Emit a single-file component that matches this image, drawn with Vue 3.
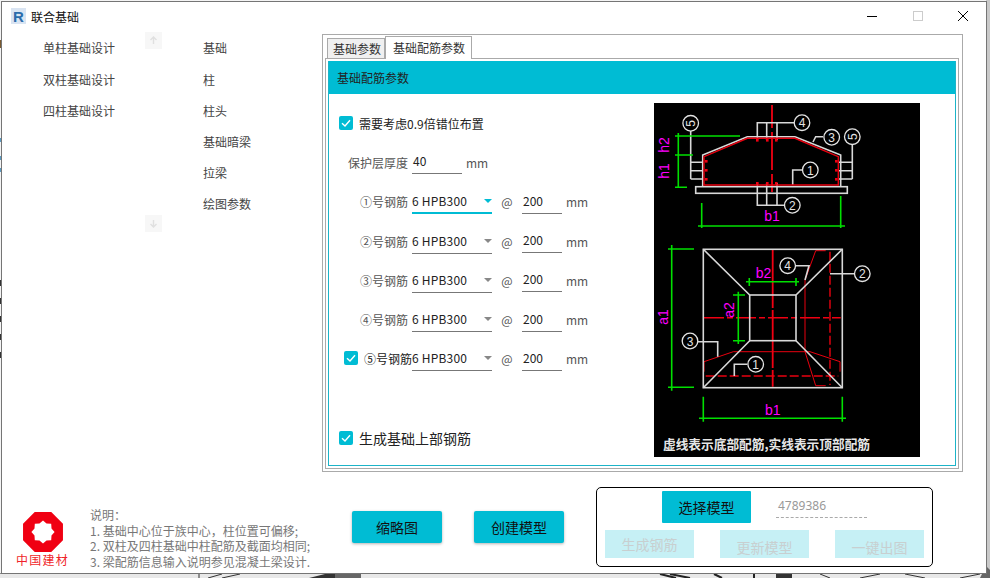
<template>
  <div class="desktop">
    <svg class="backdrop" width="990" height="578" viewBox="0 0 990 578">
      <rect x="0" y="0" width="990" height="578" fill="#f4f4f4" />
      <rect x="986" y="0" width="4" height="578" fill="#c9c9c9" />
      <rect x="0" y="573" width="990" height="5" fill="#e8e8e8" />
      <rect x="0" y="573" width="990" height="1" fill="#8a8a8a" />
      <rect x="0" y="40" width="1" height="8" fill="#7a5a30" />
      <path d="M0.5 138V142M0.5 156V160M0.5 168V172" stroke="#5c9ac0" />
      <path d="M0.5 280V286M0.5 298V304M0.5 316V322M0.5 334V340M0.5 352V358" stroke="#333" />
      <path d="M199 574V578M208 578L222 574M222 578L240 574" stroke="#333" fill="none" />
      <path d="M309 578L325 574H335V578Z" fill="#333" />
      <rect x="335" y="574" width="26" height="4" fill="#666" />
      <path d="M660 574L676 578M670 574L690 578M714 574L722 578M754 574V578" stroke="#222" stroke-width="2" fill="none" />
      <rect x="776" y="574" width="16" height="4" fill="#333" />
      <path d="M820 574L830 578M860 578L880 574M905 574L925 578M960 578L980 574" stroke="#333" fill="none" />
      <path d="M986 566L990 570V578H980Z" fill="#666" />
    </svg>

    <div class="window">
      <header class="titlebar">
        <svg class="app-icon" width="15" height="16" viewBox="0 0 15 16">
          <rect width="15" height="16" fill="#d9e4f2" />
          <text x="2" y="14" class="app-letter">R</text>
        </svg>
        <span class="title">联合基础</span>
        <div class="controls">
          <span class="ctrl">
            <svg width="12" height="12" viewBox="0 0 12 12"><path d="M1 6.5H11" stroke="#000" /></svg>
          </span>
          <span class="ctrl">
            <svg width="12" height="12" viewBox="0 0 12 12"><rect x="1.5" y="1.5" width="9" height="9" fill="none" stroke="#ccc" /></svg>
          </span>
          <span class="ctrl">
            <svg width="12" height="12" viewBox="0 0 12 12"><path d="M1 1L11 11M11 1L1 11" stroke="#000" /></svg>
          </span>
        </div>
      </header>

      <main class="main">
        <ul class="list list-types">
          <li v-for="t in types" :key="t">{{ t }}</li>
        </ul>
        <div class="scroller">
          <span class="scroll-btn">
            <svg width="9" height="9" viewBox="0 0 9 9"><path d="M4.5 8V1M1.5 4L4.5 1L7.5 4" stroke="#e0e0e0" fill="none" stroke-width="1.4" /></svg>
          </span>
          <span class="scroll-btn">
            <svg width="9" height="9" viewBox="0 0 9 9"><path d="M4.5 1V8M1.5 5L4.5 8L7.5 5" stroke="#e0e0e0" fill="none" stroke-width="1.4" /></svg>
          </span>
        </div>
        <ul class="list list-parts">
          <li v-for="p in parts" :key="p">{{ p }}</li>
        </ul>

        <section class="tabs">
          <div class="tab-strip">
            <span class="tab">基础参数</span>
            <span class="tab tab-active">基础配筋参数</span>
          </div>
          <div class="tab-panel">
            <div class="card">
              <div class="card-head">基础配筋参数</div>
              <div class="card-body">
                <div class="form">
                  <div class="row row-check">
                    <span class="check">
                      <svg width="14" height="14" viewBox="0 0 14 14"><path d="M3 7.2L6 10L11 4.2" stroke="#fff" stroke-width="1.4" fill="none" /></svg>
                    </span>
                    <span class="check-text">需要考虑0.9倍错位布置</span>
                  </div>
                  <div class="row">
                    <span class="label">保护层厚度</span>
                    <span class="field field-cover">40</span>
                    <span class="unit">mm</span>
                  </div>
                  <div v-for="(b, i) in bars" :key="b.name" class="row">
                    <span v-if="b.check" class="check check-five">
                      <svg width="14" height="14" viewBox="0 0 14 14"><path d="M3 7.2L6 10L11 4.2" stroke="#fff" stroke-width="1.4" fill="none" /></svg>
                    </span>
                    <span class="label" :class="{ 'label-five': b.check }">{{ b.name }}</span>
                    <span class="select" :class="{ 'select-focus': i === 0, 'select-five': b.check }">
                      6 HPB300
                      <i class="caret"></i>
                    </span>
                    <span class="at">@</span>
                    <span class="field field-space">200</span>
                    <span class="unit">mm</span>
                  </div>
                  <div class="row row-check row-last">
                    <span class="check">
                      <svg width="14" height="14" viewBox="0 0 14 14"><path d="M3 7.2L6 10L11 4.2" stroke="#fff" stroke-width="1.4" fill="none" /></svg>
                    </span>
                    <span class="check-text check-text-big">生成基础上部钢筋</span>
                  </div>
                </div>

                <svg class="sketch" width="266" height="354" viewBox="654 103 266 354">
                  <rect x="654" y="103" width="266" height="354" fill="#000" />
                  <!-- section -->
                  <path d="M772 105V128M772 132V170M772 174V192" stroke="#f00012" stroke-width="1.8" fill="none" />
                  <g stroke="#d8d8d8" stroke-width="1.6" fill="none">
                    <path d="M702.7 186.7V155L747.3 136.7H795L840.7 155V186.7" />
                    <rect x="695.7" y="186.7" width="151.6" height="6.6" />
                    <path d="M690.7 131V179M690.7 162.3H703M690.7 170.7H703M690.7 179H703" />
                    <path d="M852.3 145V179M852.3 162.3H838M852.3 170.7H838M852.3 179H838" />
                    <path d="M794 122.7H757.3V140M766.7 122.7V140M777 122.7V140" />
                    <path d="M784 205.3H757.3V183M766.7 205.3V183M777 205.3V183" />
                    <path d="M823 136.7H815.7L813 142" />
                    <path d="M802 170H792.7V185" />
                  </g>
                  <path d="M704 185V156.7L747.3 138.3H795L838.3 156.7V185Z" stroke="#e8000f" stroke-width="1.4" fill="none" />
                  <g fill="#f00012">
                    <rect v-for="d in rebarDots" :key="d[0] + '-' + d[1]" :x="d[0]" :y="d[1]" width="2.6" height="2.6" />
                  </g>
                  <g stroke="#00e000" stroke-width="1.6" fill="none">
                    <path d="M678.3 133V188M675 136H740M675 155H693M675 187.3H687" />
                    <path d="M701.7 203V228M840.7 196V228M698 226H845" />
                  </g>
                  <g class="cad-label">
                    <text x="669" y="145" transform="rotate(-90 669 145)">h2</text>
                    <text x="669" y="171" transform="rotate(-90 669 171)">h1</text>
                    <text x="772" y="221">b1</text>
                  </g>
                  <!-- plan -->
                  <path d="M772.7 250V386.7" stroke="#f00012" stroke-width="1.8" stroke-dasharray="58 2" fill="none" />
                  <path d="M704 317.7H840.7" stroke="#f00012" stroke-width="1.6" stroke-dasharray="20 3 6 3" fill="none" />
                  <path d="M830 251.7V385M705.7 376H838.3" stroke="#e8000f" stroke-width="1.4" stroke-dasharray="9 3" fill="none" />
                  <path d="M825.7 250.7H815.7L805 280V351.7L815.7 385.7H825.7M704 371.7V361.7L733.3 351.7H810L840 361.7V371.7" stroke="#e8000f" fill="none" />
                  <g stroke="#d8d8d8" stroke-width="1.6" fill="none">
                    <rect x="703.3" y="249.3" width="139" height="138.4" />
                    <rect x="749.7" y="295" width="46.3" height="45.7" />
                    <path d="M703.3 249.3L749.7 295M842.3 249.3L796 295M703.3 387.7L749.7 340.7M842.3 387.7L796 340.7" />
                    <path d="M796 265.7H809L805 280M854 273.7H830M698 341.7H717.7V356.7M747.3 364.3H734.3V376" />
                  </g>
                  <g stroke="#00e000" stroke-width="1.6" fill="none">
                    <path d="M671.7 245V390.7M668 249H694M668 387.3H694" />
                    <path d="M738.3 291.7V344M733 295H745M733 340.7H745" />
                    <path d="M746 281.7H799M749.3 278V286M796 278V286" />
                    <path d="M703.3 396.7V421.7M842.3 396.7V421.7M699 418.3H846" />
                  </g>
                  <g class="cad-label">
                    <text x="668" y="317" transform="rotate(-90 668 317)">a1</text>
                    <text x="734" y="310" transform="rotate(-90 734 310)">a2</text>
                    <text x="763.5" y="278">b2</text>
                    <text x="772.7" y="415">b1</text>
                  </g>
                  <g v-for="c in callouts" :key="c.x + '-' + c.y">
                    <circle :cx="c.x" :cy="c.y" r="7.8" fill="#000" stroke="#e4e4e4" stroke-width="1.3" />
                    <text
                      class="cad-num"
                      :x="c.x"
                      :y="c.y + 4.5"
                      :transform="c.turn ? `rotate(-90 ${c.x} ${c.y})` : null"
                    >{{ c.n }}</text>
                  </g>
                  <text class="cad-note" x="663" y="449" textLength="207" lengthAdjust="spacingAndGlyphs">虚线表示底部配筋,实线表示顶部配筋</text>
                </svg>
              </div>
            </div>
          </div>
        </section>
      </main>

      <footer class="footer">
        <div class="logo">
          <svg width="40" height="40" viewBox="-20 -20 40 40">
            <path fill-rule="evenodd" fill="#f00012" :d="logoPath" />
          </svg>
          <span class="logo-text">中国建材</span>
        </div>
        <div class="notes">
          <div v-for="n in notes" :key="n">{{ n }}</div>
        </div>
        <button class="btn btn-thumb">缩略图</button>
        <button class="btn btn-create">创建模型</button>
        <div class="group">
          <div class="group-top">
            <button class="btn-flat">选择模型</button>
            <span class="model-id">4789386</span>
          </div>
          <div class="group-bottom">
            <span class="btn-off btn-off-first">生成钢筋</span>
            <span class="btn-off">更新模型</span>
            <span class="btn-off">一键出图</span>
          </div>
        </div>
      </footer>
    </div>
  </div>
</template>

<script setup>
const types = ["单柱基础设计", "双柱基础设计", "四柱基础设计"];
const parts = ["基础", "柱", "柱头", "基础暗梁", "拉梁", "绘图参数"];

const bars = [
  { name: "①号钢筋" },
  { name: "②号钢筋" },
  { name: "③号钢筋" },
  { name: "④号钢筋" },
  { name: "⑤号钢筋", check: true },
];

const notes = [
  "说明：",
  "1. 基础中心位于族中心，柱位置可偏移;",
  "2. 双柱及四柱基础中柱配筋及截面均相同;",
  "3. 梁配筋信息输入说明参见混凝土梁设计.",
];

const callouts = [
  { x: 690.7, y: 123.3, n: 5, turn: true },
  { x: 802, y: 122.7, n: 4 },
  { x: 831.7, y: 137.3, n: 3 },
  { x: 852.3, y: 136.7, n: 5, turn: true },
  { x: 810.3, y: 170, n: 1 },
  { x: 792.3, y: 205.3, n: 2 },
  { x: 787.7, y: 265.7, n: 4 },
  { x: 862.3, y: 273.7, n: 2 },
  { x: 690, y: 341, n: 3 },
  { x: 755.7, y: 364.3, n: 1 },
];

const rebarDots = [
  [705, 160], [705, 169], [705, 178],
  [835, 160], [835, 169], [835, 178],
  [756, 139], [766, 139], [775, 139],
  [756, 182], [766, 182], [775, 182],
];

// 팔각형 + 별 모양 구멍
function ring(count, radii, start) {
  let d = "";
  for (let i = 0; i < count; i++) {
    const r = radii[i % radii.length];
    const a = start + (i * 2 * Math.PI) / count;
    d += (i === 0 ? "M" : "L") + (r * Math.cos(a)).toFixed(2) + " " + (r * Math.sin(a)).toFixed(2);
  }
  return d + "Z";
}
const logoPath = ring(8, [21.6], Math.PI / 8) + ring(16, [11.6, 9.2], 0);
</script>

<style>
html,
body {
  margin: 0;
  background: #f4f4f4;
}
</style>

<style scoped>
.desktop {
  position: relative;
  width: 990px;
  height: 578px;
  overflow: hidden;
  padding: 1px 0 0 1px;
  box-sizing: border-box;
  font-family: "Noto Sans CJK SC", "Noto Sans", sans-serif;
  font-size: 12px;
  color: #333;
}
.backdrop {
  position: absolute;
  left: 0;
  top: 0;
}
.window {
  position: relative;
  width: 986px;
  height: 573px;
  box-sizing: border-box;
  border: 1px solid #757575;
  background: #fff;
  display: flex;
  flex-direction: column;
}

/* title bar */
.titlebar {
  height: 30px;
  flex: none;
  box-sizing: border-box;
  display: flex;
  align-items: center;
  padding: 0 0 2px 9px;
}
.app-icon {
  flex: none;
}
.app-letter {
  font-family: "Liberation Sans", sans-serif;
  font-weight: 700;
  font-size: 15px;
  fill: #2a6cab;
}
.title {
  margin-left: 5px;
  color: #111;
}
.controls {
  margin-left: auto;
  display: flex;
}
.ctrl {
  width: 45.5px;
  height: 28px;
  display: flex;
  align-items: center;
  justify-content: center;
}

/* main */
.main {
  height: 442px;
  flex: none;
  display: flex;
}
.list {
  list-style: none;
  margin: 0;
  padding: 0;
}
.list li {
  height: 31.2px;
  line-height: 31.2px;
  white-space: nowrap;
  color: #444;
}
.list-types {
  margin-left: 41px;
  width: 102px;
  padding-top: 0.4px;
}
.scroller {
  width: 17px;
  height: 200px;
  display: flex;
  flex-direction: column;
  justify-content: space-between;
}
.scroll-btn {
  width: 17px;
  height: 17px;
  background: #f7f7f7;
  display: flex;
  align-items: center;
  justify-content: center;
}
.list-parts {
  margin-left: 41px;
  width: 119px;
  padding-top: 0.4px;
}

/* tabs */
.tabs {
  margin: 2px 0 0 0;
  width: 641px;
  height: 438px;
  box-sizing: border-box;
  border: 1px solid #aaa;
  display: flex;
  flex-direction: column;
}
.tab-strip {
  height: 23px;
  flex: none;
  display: flex;
  align-items: flex-end;
  padding-left: 4px;
  position: relative;
  z-index: 1;
}
.tab {
  height: 20px;
  line-height: 19px;
  box-sizing: border-box;
  padding: 0 3px 0 5px;
  background: #f0f0f0;
  border: 1px solid #aaa;
  border-bottom: none;
  color: #333;
}
.tab-active {
  height: 23px;
  line-height: 21px;
  margin-bottom: -1px;
  padding: 0 6px 0 7px;
  background: #fff;
}
.tab-panel {
  height: 411px;
  margin: 0 3px 0 2px;
  box-sizing: border-box;
  border: 1px solid #aaa;
  padding: 2px;
}
.card {
  height: 100%;
  box-sizing: border-box;
  border: 1px solid #1db4c8;
  border-top: none;
  display: flex;
  flex-direction: column;
}
.card-head {
  height: 33px;
  flex: none;
  background: #00bcd4;
  line-height: 33px;
  padding-left: 8px;
  color: #222;
}
.card-body {
  flex: 1;
  display: flex;
}

/* form */
.form {
  width: 325px;
  flex: none;
  padding-top: 9.5px;
  box-sizing: border-box;
}
.row {
  position: relative;
  height: 39.3px;
  display: flex;
  align-items: center;
}
.row-check {
  padding-left: 10px;
}
.row-last {
  margin-top: 39.7px;
}
.check {
  width: 14px;
  height: 14px;
  flex: none;
  border-radius: 2px;
  background: #00bcd4;
  display: block;
}
.check svg {
  display: block;
}
.check-five {
  position: absolute;
  left: 15px;
  top: 12px;
}
.check-text {
  margin-left: 6px;
  color: #222;
}
.check-text-big {
  font-size: 14px;
}
.label {
  width: 79px;
  flex: none;
  text-align: right;
  color: #555;
  white-space: nowrap;
}
.label-five {
  width: 83px;
  color: #222;
}
.select {
  position: relative;
  width: 80px;
  height: 24px;
  line-height: 21px;
  margin-left: 4px;
  box-sizing: border-box;
  border-bottom: 1px solid #777;
  color: #222;
  margin-top: 1px;
  letter-spacing: 0.2px;
}
.select-five {
  margin-left: 0;
}
.select-focus {
  border-bottom: 2px solid #00bcd4;
}
.select-focus .caret {
  border-top-color: #00bcd4;
}
.caret {
  position: absolute;
  right: 0;
  top: 9px;
  border-left: 4px solid transparent;
  border-right: 4px solid transparent;
  border-top: 4px solid #888;
}
.at {
  width: 30px;
  flex: none;
  text-align: center;
  color: #555;
}
.field {
  height: 22px;
  line-height: 18px;
  box-sizing: border-box;
  border-bottom: 1px solid #777;
  color: #222;
}
.field-cover {
  width: 50px;
  margin: 1px 0 0 4px;
  padding-left: 1px;
}
.field-space {
  width: 40px;
  margin-top: 2px;
  padding-left: 1px;
}
.unit {
  margin-left: 4px;
  color: #555;
}

/* drawing */
.sketch {
  flex: none;
  margin-top: 9px;
  display: block;
}
.cad-label text {
  font-family: "Liberation Sans Narrow", "Liberation Sans", sans-serif;
  font-size: 14px;
  fill: #ff00ff;
  text-anchor: middle;
}
.cad-num {
  font-family: "Liberation Sans", sans-serif;
  font-size: 12px;
  fill: #e4e4e4;
  text-anchor: middle;
}
.cad-note {
  font-family: "Noto Sans CJK SC", sans-serif;
  font-size: 13px;
  font-weight: 700;
  fill: #e6e6e6;
}

/* footer */
.footer {
  flex: 1;
  display: flex;
  align-items: flex-start;
}
.logo {
  margin: 38px 0 0 14px;
  width: 53px;
  flex: none;
  display: flex;
  flex-direction: column;
  align-items: center;
}
.logo svg {
  display: block;
}
.logo-text {
  font-size: 12px;
  line-height: 14px;
  margin-top: 1px;
  letter-spacing: 1.3px;
  color: #f01f2a;
  white-space: nowrap;
}
.notes {
  margin: 33px 0 0 21px;
  width: 241px;
  flex: none;
  font-size: 12px;
  line-height: 15.5px;
  color: #777;
  white-space: nowrap;
}
.btn {
  width: 90px;
  height: 32px;
  flex: none;
  margin-top: 37px;
  border: none;
  border-radius: 2px;
  background: #00bcd4;
  box-shadow: 0 1px 3px rgba(0, 0, 0, 0.3);
  font: inherit;
  font-size: 14px;
  color: #111;
  padding: 0;
}
.btn-thumb {
  margin-left: 21px;
}
.btn-create {
  margin-left: 32px;
}
.group {
  margin: 13px 0 0 32px;
  width: 337px;
  height: 80px;
  box-sizing: border-box;
  border: 1px solid #000;
  border-radius: 5px;
  padding: 3px 8px;
  display: flex;
  flex-direction: column;
  gap: 7px;
}
.group-top {
  display: flex;
  align-items: flex-start;
}
.btn-flat {
  width: 89px;
  height: 32px;
  margin-left: 57px;
  border: none;
  border-radius: 1px;
  background: #00bcd4;
  font: inherit;
  font-size: 14px;
  color: #111;
  padding: 0;
}
.model-id {
  margin: 6px 0 0 25px;
  width: 91px;
  height: 21px;
  box-sizing: border-box;
  padding-left: 2px;
  border-bottom: 1px dashed #aaa;
  font-family: "Noto Sans", sans-serif;
  color: #999;
  line-height: 17px;
}
.group-bottom {
  display: flex;
  justify-content: space-between;
}
.btn-off {
  width: 89px;
  height: 28px;
  background: #c6f0f5;
  color: #c8cfd0;
  font-size: 14px;
  text-align: center;
  line-height: 34px;
  overflow: hidden;
}
.btn-off-first {
  line-height: 28px;
}
</style>
